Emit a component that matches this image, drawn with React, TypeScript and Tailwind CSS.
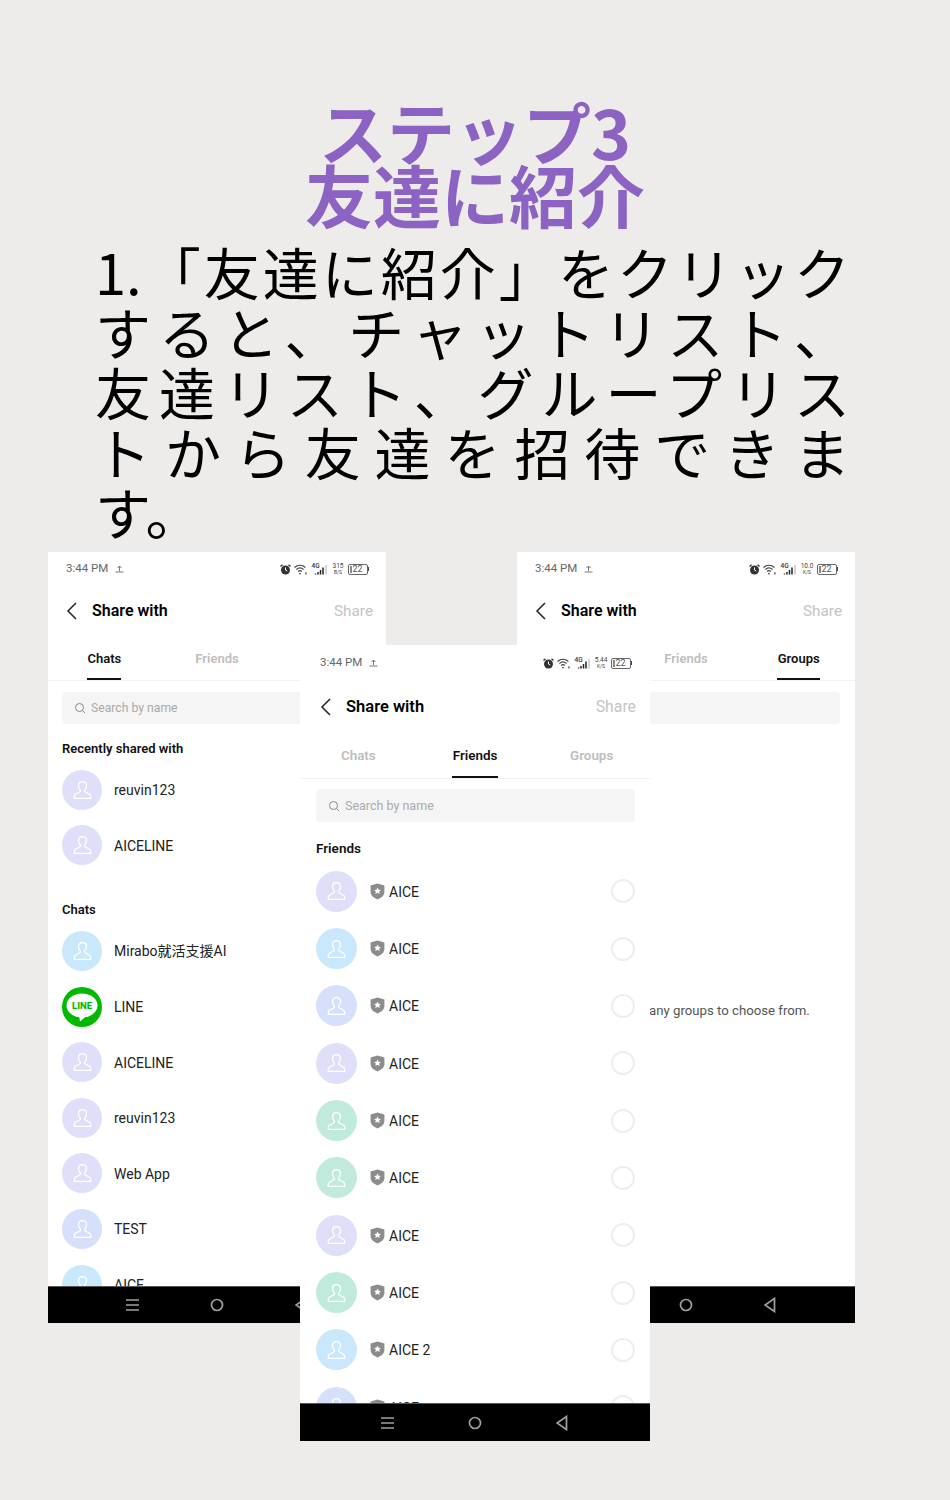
import React from "react";

const bodyLines = [
  "1.「友達に紹介」をクリック",
  "すると、チャットリスト、",
  "友達リスト、グループリス",
  "トから友達を招待できま",
];

type Row = { name: string; color: string };

const purple = "bg-[#dfdffa]";
const blue = "bg-[#c9e8fb]";
const green = "bg-[#c0eadb]";
const periwinkle = "bg-[#d6e0fb]";

const friends: Row[] = [
  { name: "AICE", color: purple },
  { name: "AICE", color: blue },
  { name: "AICE", color: periwinkle },
  { name: "AICE", color: purple },
  { name: "AICE", color: green },
  { name: "AICE", color: green },
  { name: "AICE", color: purple },
  { name: "AICE", color: green },
  { name: "AICE 2", color: blue },
  { name: "AICE", color: periwinkle },
];

const PersonIcon = () => (
  <svg width="19" height="20" viewBox="0 0 18 19" fill="none" stroke="white" strokeWidth="1.200">
    <path d="M9 1.500c-2.300 0-3.800 1.800-3.800 4 0 1.700.7 3 1.600 3.900.4.500.4 1.300-.2 1.700l-4.200 2.400c-.8.500-1.200 1-1.200 1.900v2h15.600v-2c0-.9-.4-1.400-1.200-1.900l-4.200-2.400c-.6-.4-.6-1.200-.2-1.700.9-.9 1.600-2.200 1.600-3.900 0-2.200-1.500-4-3.800-4z" />
  </svg>
);

const Avatar = ({ color, size }: { color: string; size: string }) => (
  <div className={`rounded-full shrink-0 flex items-center justify-center ${size} ${color}`}>
    <PersonIcon />
  </div>
);

const LineAvatar = () => (
  <svg width="40" height="40" viewBox="0 0 40 40" className="shrink-0">
    <circle cx="20" cy="20" r="20" fill="#00b900" />
    <ellipse cx="20" cy="18.500" rx="15.500" ry="12" fill="white" />
    <path d="M17 29l1 5.500 7-6z" fill="white" />
    <text x="20" y="22" textAnchor="middle" fontSize="9.500" fontWeight="800" fill="#00b900" fontFamily="Roboto, sans-serif">
      LINE
    </text>
  </svg>
);

const ShieldIcon = () => (
  <svg width="15" height="17" viewBox="0 0 14 16" className="shrink-0">
    <path d="M7 .5l6.500 1.800v6.200c0 3.200-2.800 5.500-6.500 7-3.700-1.500-6.500-3.800-6.500-7V2.300z" fill="#8c8c8c" />
    <path d="M7 4.200l1 2.100 2.200.3-1.600 1.500.4 2.200L7 9.200l-2 1.100.4-2.200-1.600-1.500 2.200-.3z" fill="white" />
  </svg>
);

const Alarm = () => (
  <svg width="11" height="11" viewBox="0 0 11 11">
    <circle cx="5.500" cy="6" r="4.500" fill="#333" />
    <path d="M5.500 3.500V6l1.800 1" stroke="white" strokeWidth="1" fill="none" />
    <path d="M.5 2.500L2.500.8M10.500 2.500L8.500.8" stroke="#333" strokeWidth="1.400" />
  </svg>
);

const Wifi = () => (
  <svg width="13" height="11" viewBox="0 0 12 10" fill="none" stroke="#444" strokeWidth="1.100">
    <path d="M.5 3.200c3-2.600 7-2.600 10 0M2.200 5c2-1.700 4.600-1.700 6.600 0M3.800 6.800c1-.9 2.400-.9 3.400 0" />
    <circle cx="5.500" cy="8.700" r=".8" fill="#444" stroke="none" />
    <path d="M11 7.500v2" stroke="#444" />
  </svg>
);

const Signal = () => (
  <div className="relative w-[15px] h-[11px] ml-[2px]">
    <span className="absolute left-0 -top-[1px] text-[6.500px] leading-[7px] font-medium text-[#333]">4G</span>
    <svg width="15" height="11" viewBox="0 0 15 11" className="absolute inset-0">
      <path d="M3.500 9.500v1M6 8v2.500M8.500 6v4.500M11 3.500v7" stroke="#222" strokeWidth="1.500" />
      <path d="M14 1v9.500" stroke="#aaa" strokeWidth="1" />
    </svg>
  </div>
);

const Battery = () => (
  <div className="flex items-center">
    <div className="w-[20px] h-[11px] border border-[#666] rounded-[2px] flex items-center pl-[1px] gap-[1px]">
      <span className="w-[2px] h-[7px] bg-[#888]" />
      <span className="text-[9px] leading-none text-[#555]">22</span>
    </div>
    <span className="w-[1.500px] h-[4px] bg-[#444]" />
  </div>
);

const StatusBar = ({ speed, unit, height, padLeft, padRight }: { speed: string; unit: string; height: string; padLeft: string; padRight: string }) => (
  <div className={`flex items-center justify-between shrink-0 ${height} ${padLeft} ${padRight}`}>
    <div className="flex items-center gap-[7px] text-[11.500px] text-[#666]">
      <span>3:44 PM</span>
      <svg width="9" height="8" viewBox="0 0 9 8" fill="none" stroke="#777" strokeWidth="1">
        <path d="M4.500 6V1M2.500 3l2-2 2 2M.5 7h8" />
      </svg>
    </div>
    <div className="flex items-center gap-[3px]">
      <Alarm />
      <Wifi />
      <Signal />
      <div className="flex flex-col items-center w-[13px] text-[6.500px] leading-[6px] text-[#444] ml-[2px]">
        <span>{speed}</span>
        <span className="text-[5px]">{unit}</span>
      </div>
      <Battery />
    </div>
  </div>
);

const Header = ({ height, title, action, pad }: { height: string; title: string; action: string; pad: string }) => (
  <div className={`flex items-center shrink-0 ${height} ${pad}`}>
    <svg width="12" height="18" viewBox="0 0 12 18" fill="none" stroke="#222" strokeWidth="1.500" className="shrink-0">
      <path d="M10 1L2 9l8 8" />
    </svg>
    <span className={`ml-[14px] pt-[1px] font-semibold text-black ${title}`}>Share with</span>
    <span className={`ml-auto pt-[1px] text-[#c4c4c4] ${action}`}>Share</span>
  </div>
);

const Tabs = ({ active, height, underline, size }: { active: string; height: string; underline: string; size: string }) => (
  <div className={`flex shrink-0 border-b border-[#f3f3f3] ${height}`}>
    {["Chats", "Friends", "Groups"].map((tab) => (
      <div key={tab} className="flex-1 flex flex-col items-center justify-between pt-[15px]">
        <span className={`leading-[18px] font-semibold ${size} ${tab === active ? "text-[#111]" : "text-[#bdbdbd]"}`}>{tab}</span>
        <span className={`h-[2px] ${tab === active ? `bg-[#111] ${underline}` : ""}`} />
      </div>
    ))}
  </div>
);

const SearchBox = ({ margin, height, size, text }: { margin: string; height: string; size: string; text: boolean }) => (
  <div className={`flex items-center gap-[5px] pl-[12px] rounded-[4px] bg-[#f5f5f5] shrink-0 ${margin} ${height}`}>
    {text && (
      <>
        <svg width="12" height="12" viewBox="0 0 12 12" fill="none" stroke="#888" strokeWidth="1">
          <circle cx="5.500" cy="5.500" r="4" />
          <path d="M8.500 8.500l2.500 2.500" />
        </svg>
        <span className={`pt-[1px] text-[#aaa] ${size}`}>Search by name</span>
      </>
    )}
  </div>
);

const NavBar = ({ cell, height }: { cell: string; height: string }) => (
  <div className={`mt-auto flex items-center justify-center bg-black border-t border-[#555] shrink-0 ${height}`}>
    <div className={`flex justify-center ${cell}`}>
      <svg width="14" height="14" viewBox="0 0 14 14" stroke="#a0a0a0" strokeWidth="1.700">
        <path d="M0 2h13M0 7h13M0 12h13" />
      </svg>
    </div>
    <div className={`flex justify-center ${cell}`}>
      <svg width="14" height="14" viewBox="0 0 14 14" fill="none" stroke="#a0a0a0" strokeWidth="1.700">
        <circle cx="7" cy="7" r="5.500" />
      </svg>
    </div>
    <div className={`flex justify-center ${cell}`}>
      <svg width="14" height="16" viewBox="0 0 14 16" fill="none" stroke="#a0a0a0" strokeWidth="1.700">
        <path d="M10.500 1.500v13L1 8z" />
      </svg>
    </div>
  </div>
);

const ChatRow = ({ name, color }: Row) => (
  <div className="flex items-center gap-[12px] h-[55.600px] shrink-0">
    {name === "LINE" ? <LineAvatar /> : <Avatar color={color} size="w-10 h-10" />}
    <span className="pt-[2px] text-[14px] text-[#222]">{name}</span>
  </div>
);

const ChatsScreen = () => (
  <div className="absolute left-[48px] top-[552px] w-[338px] h-[771px] bg-white flex flex-col overflow-hidden">
    <StatusBar speed="315" unit="B/S" height="h-[34px]" padLeft="pl-[18px]" padRight="pr-[17px]" />
    <Header height="h-[49px]" title="text-[16px]" action="text-[15.300px]" pad="pl-[18px] pr-[13px]" />
    <Tabs active="Chats" height="h-[46px]" underline="w-[34px]" size="text-[13px]" />
    <div className="flex-1 min-h-0 px-[14px] flex flex-col overflow-hidden">
      <SearchBox margin="mt-[11px]" height="h-[32px]" size="text-[12.200px]" text />
      <div className="mt-[15px] h-[20px] leading-[20px] text-[13px] font-semibold text-[#111] shrink-0">Recently shared with</div>
      <div className="mt-[3px]">
        <ChatRow name="reuvin123" color={purple} />
        <ChatRow name="AICELINE" color={purple} />
      </div>
      <div className="mt-[27px] h-[20px] leading-[20px] text-[13px] font-semibold text-[#111] shrink-0">Chats</div>
      <div className="mt-[3px]">
        <ChatRow name="Mirabo就活支援AI" color={blue} />
        <ChatRow name="LINE" color={blue} />
        <ChatRow name="AICELINE" color={purple} />
        <ChatRow name="reuvin123" color={purple} />
        <ChatRow name="Web App" color={purple} />
        <ChatRow name="TEST" color={periwinkle} />
        <ChatRow name="AICE" color={blue} />
      </div>
    </div>
    <NavBar cell="w-[84.500px]" height="h-[37px]" />
  </div>
);

const GroupsScreen = () => (
  <div className="absolute left-[517px] top-[552px] w-[338px] h-[771px] bg-white flex flex-col overflow-hidden">
    <StatusBar speed="10.0" unit="K/S" height="h-[34px]" padLeft="pl-[18px]" padRight="pr-[17px]" />
    <Header height="h-[49px]" title="text-[16px]" action="text-[15.300px]" pad="pl-[18px] pr-[13px]" />
    <Tabs active="Groups" height="h-[46px]" underline="w-[43px]" size="text-[13px]" />
    <div className="flex-1 min-h-0 pl-[14px] pr-[15px] flex flex-col">
      <SearchBox margin="mt-[11px]" height="h-[32px]" size="text-[12.200px]" text={false} />
      <div className="flex-1 flex items-center justify-center">
        <span className="pt-[11px] text-[13.200px] text-[#555]">You don't have any groups to choose from.</span>
      </div>
    </div>
    <NavBar cell="w-[84.500px]" height="h-[37px]" />
  </div>
);

const FriendsScreen = () => (
  <div className="absolute left-[300px] top-[645px] w-[350px] h-[796px] bg-white flex flex-col overflow-hidden">
    <StatusBar speed="5.44" unit="K/S" height="h-[36px]" padLeft="pl-[20px]" padRight="pr-[18px]" />
    <Header height="h-[51px]" title="text-[16.500px]" action="text-[15.800px]" pad="pl-[20px] pr-[14px]" />
    <Tabs active="Friends" height="h-[47px]" underline="w-[46px]" size="text-[13.400px]" />
    <div className="flex-1 min-h-0 pl-[16px] pr-[15px] flex flex-col overflow-hidden">
      <SearchBox margin="mt-[10px]" height="h-[33px]" size="text-[12.500px]" text />
      <div className="mt-[16px] h-[20px] leading-[20px] text-[13.500px] font-semibold text-[#111] shrink-0">Friends</div>
      <div className="mt-[4.500px]">
        {friends.map((row, i) => (
          <div key={i} className="flex items-center h-[57.350px]">
            <Avatar color={row.color} size="w-[41px] h-[41px]" />
            <div className="ml-[13px]">
              <ShieldIcon />
            </div>
            <span className="ml-[4px] pt-[2px] text-[14px] text-[#222]">{row.name}</span>
            <span className="ml-auto w-[24px] h-[24px] rounded-full border-2 border-[#eeeeee]" />
          </div>
        ))}
      </div>
    </div>
    <NavBar cell="w-[87.500px]" height="h-[38px]" />
  </div>
);

export default function App() {
  return (
    <div className="relative w-[950px] h-[1500px] overflow-hidden bg-[#edecea] [font-family:Roboto,'Noto_Sans_CJK_JP',sans-serif]">
      <div className="pt-[99px] text-center text-[68px] leading-[63px] font-bold text-[#8c63c2] [font-family:'Noto_Sans_CJK_JP',sans-serif]">
        <div>ステップ3</div>
        <div>友達に紹介</div>
      </div>
      <div className="mt-[16px] ml-[95px] w-[755px] text-[56px] leading-[60px] font-normal text-black [font-family:'Noto_Sans_CJK_JP',sans-serif]">
        {bodyLines.map((line) => (
          <div key={line} className="text-justify [text-align-last:justify] [text-justify:inter-character]">
            {line}
          </div>
        ))}
        <div>す。</div>
      </div>
      <ChatsScreen />
      <GroupsScreen />
      <FriendsScreen />
    </div>
  );
}
